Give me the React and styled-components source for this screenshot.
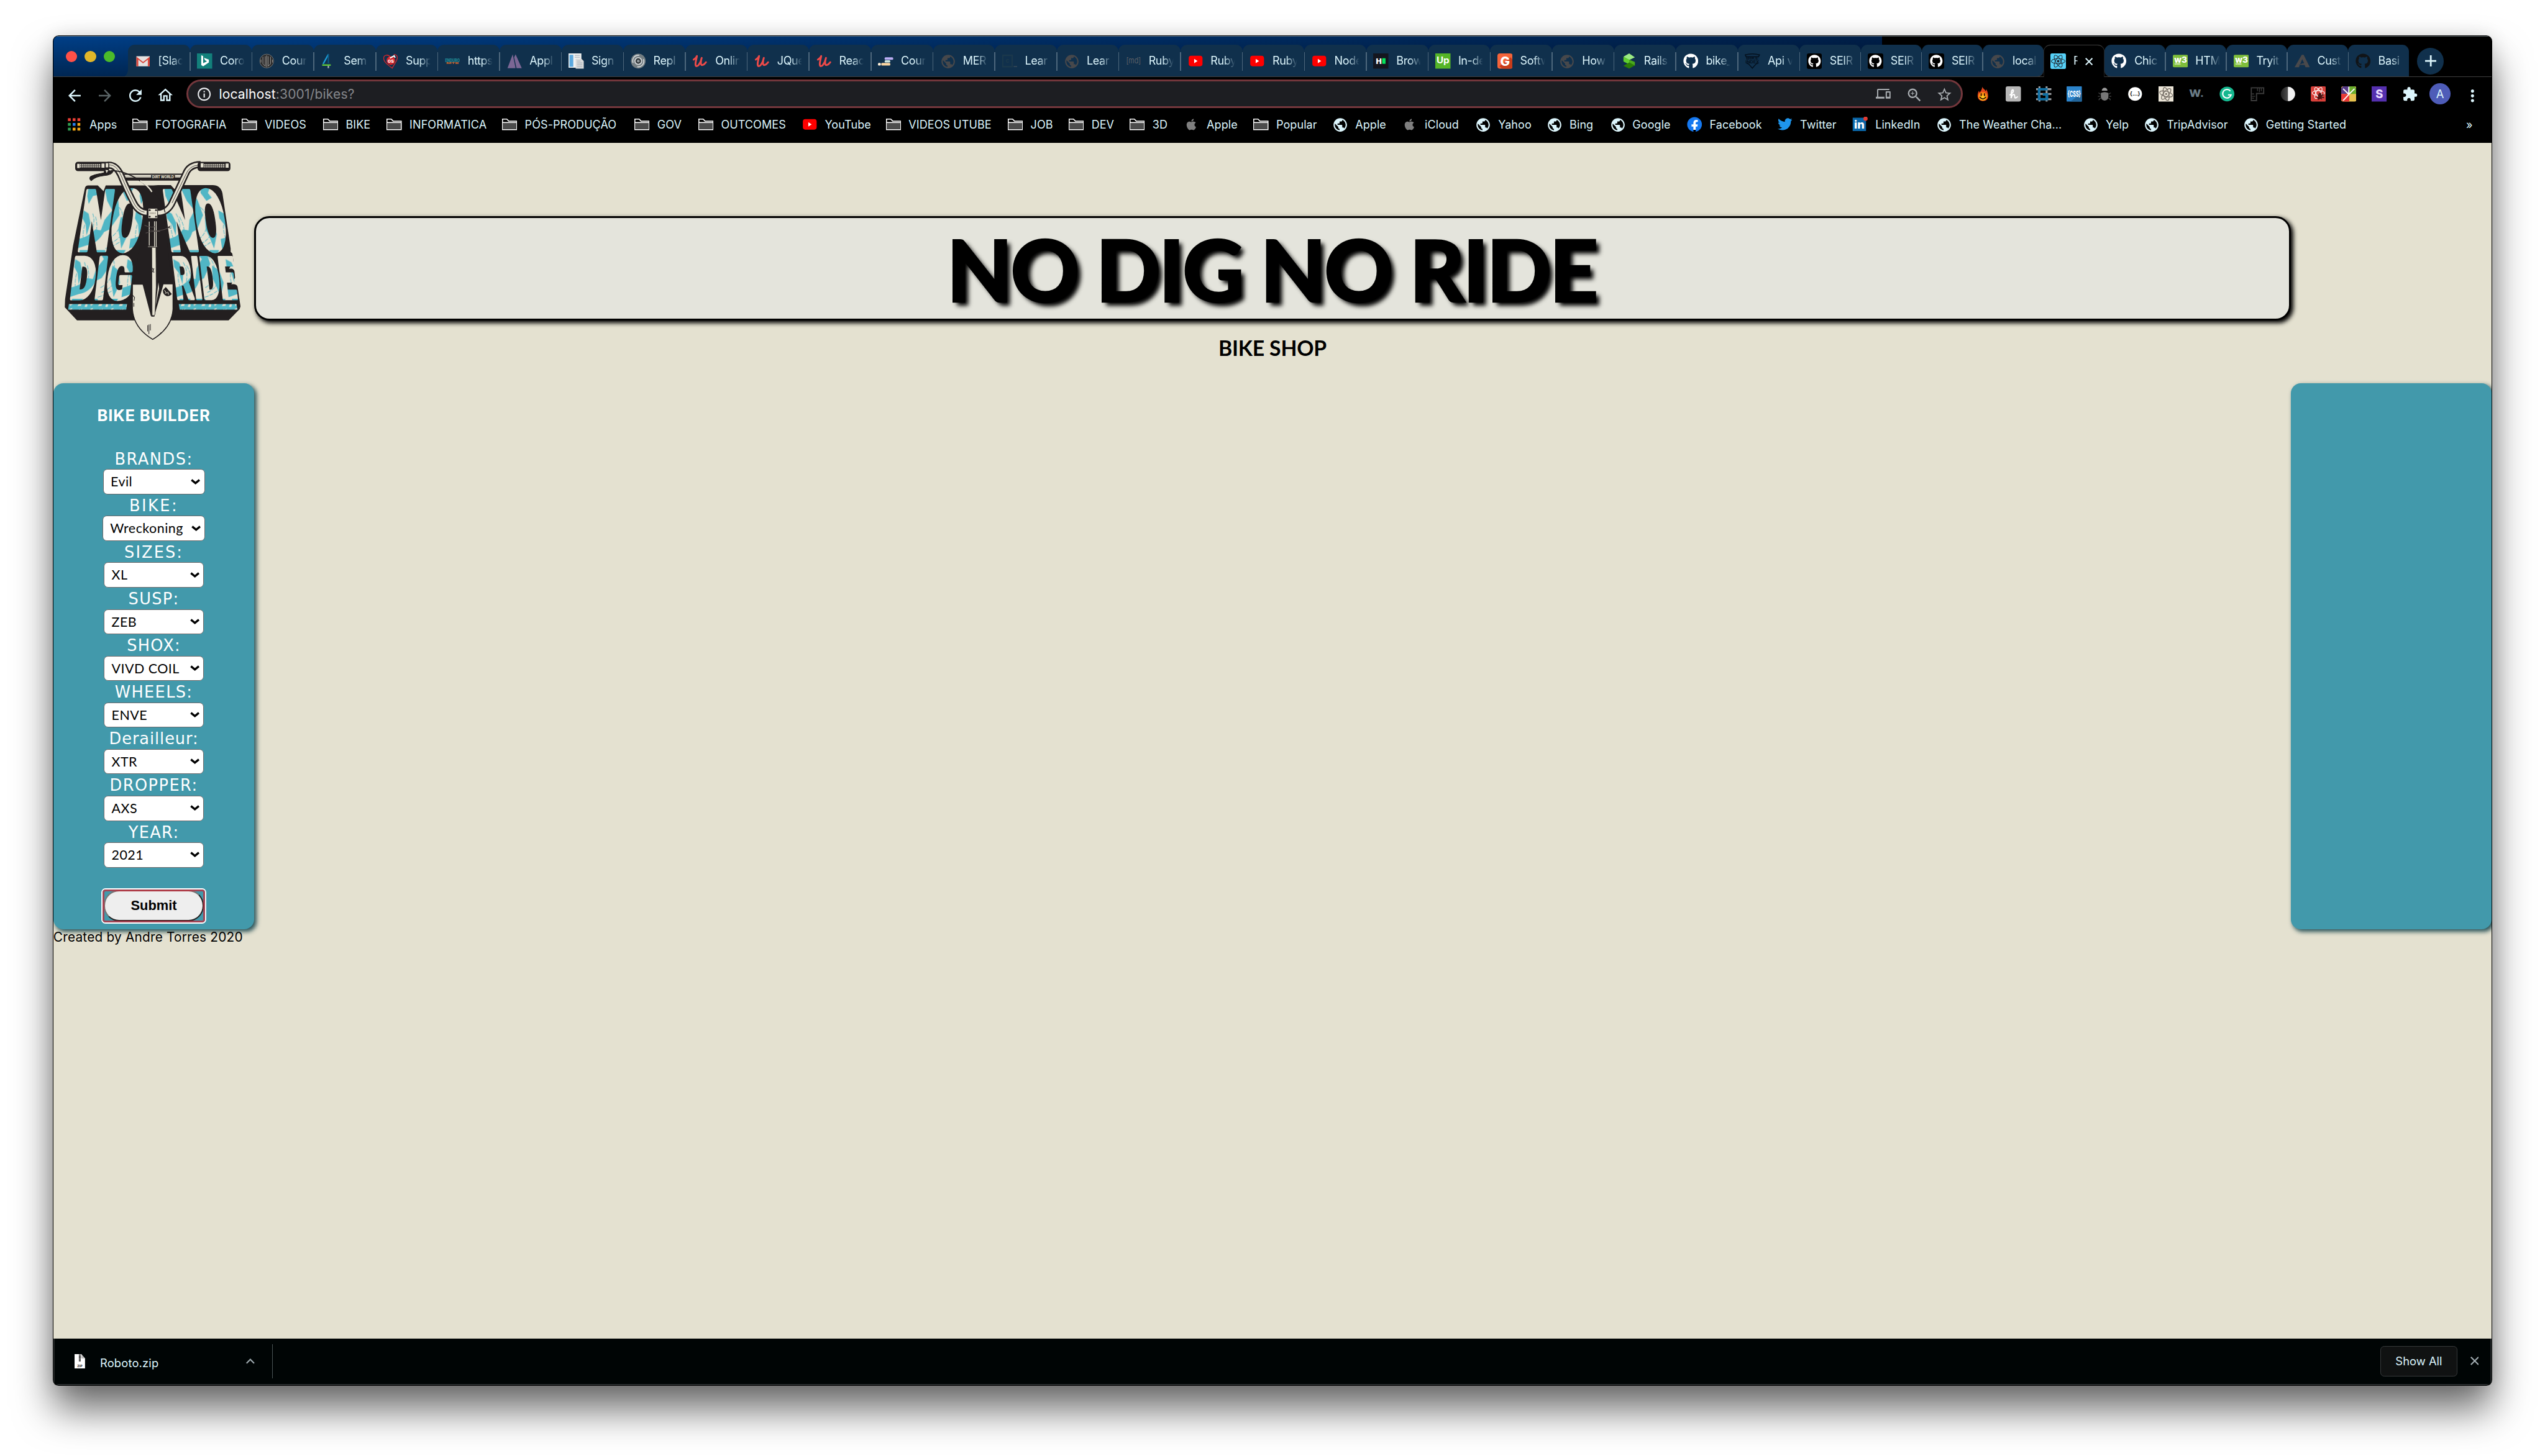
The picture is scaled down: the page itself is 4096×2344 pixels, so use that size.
import React from "react";
import styled, { createGlobalStyle, css } from "styled-components";
import {
  MdPublic, MdDevices, MdZoomIn, MdStarBorder, MdExtension, MdMoreVert,
  MdArrowBack, MdArrowForward, MdRefresh, MdInfoOutline, MdOutlineHome,
} from "react-icons/md";
import { FaGithub, FaTwitter, FaApple, FaReact, FaFacebook } from "react-icons/fa";

/* 1rem is ten device pixels of the full-size desktop */
const GlobalStyle = createGlobalStyle`
  html { font-size: 7.6647px; }
  body { margin: 0; background: #fff; overflow: hidden; }
  * { box-sizing: border-box; }
  svg { display: block; flex: none; }
`;

const ui = `Inter, "Liberation Sans", sans-serif`;
const ice = "#dcf5fc";
const tabBlue = "#10304c";

const Desktop = styled.div`
  width: 100vw;
  height: 100vh;
  padding: 7.55rem 11.2rem 0;
  overflow: hidden;
`;

const Window = styled.div`
  width: 512rem;
  height: 283.4rem;
  display: flex;
  flex-direction: column;
  border-radius: 1.1rem;
  overflow: hidden;
  background: #000;
  font-family: ${ui};
  box-shadow: 0 0 0 1px #000, 0 5rem 8rem rgba(0, 0, 0, 0.58), 0 0 4rem rgba(0, 0, 0, 0.12);
`;

/* ---------- tab strip ---------- */
const TabStrip = styled.div`
  flex: none;
  height: 8.6rem;
  display: flex;
  align-items: flex-end;
  border-top: 0.2rem solid rgba(150, 165, 170, 0.55);
  border-bottom: 0.2rem solid #3e3e3e;
  background:
    linear-gradient(rgba(0, 0, 0, 0), rgba(0, 0, 0, 0.4)) 0 0 / 384rem 100% no-repeat,
    linear-gradient(90deg, #003f88, #001f49) 0 0 / 384rem 100% no-repeat,
    #000;
  background-origin: border-box;
`;

const Lights = styled.div`
  width: 15.7rem;
  height: 100%;
  display: flex;
  gap: 1.6rem;
  padding: 3rem 0 0 2.6rem;
`;

const Light = styled.span`
  width: 2.4rem;
  height: 2.4rem;
  border-radius: 50%;
  background: ${(p) => p.$color};
`;

const TabItem = styled.div`
  flex: none;
  position: relative;
  display: flex;
  align-items: center;
  width: ${(p) => p.$w}rem;
  height: 6.6rem;
  padding: 0.2rem 0 0 1.5rem;
  gap: 1.6rem;
  color: ${ice};
  background: ${tabBlue};
  border-radius: 1.4rem 1.4rem 0 0;

  ${(p) => p.$first && css`
    &::before {
      content: "";
      position: absolute;
      left: -1rem;
      bottom: 0;
      width: 1rem;
      height: 1.6rem;
      background: radial-gradient(ellipse at 0 0, transparent 69%, ${tabBlue} 72%);
    }
  `}
  ${(p) => p.$line && css`
    &::after {
      content: "";
      position: absolute;
      left: -0.1rem;
      top: 1.5rem;
      width: 0.2rem;
      height: 4rem;
      background: #4d677c;
    }
  `}
  ${(p) => p.$active && css`
    height: 6.8rem;
    margin-bottom: -0.2rem;
    padding-top: 0;
    background: #000;
    border-top: 0.2rem solid #3e3e3e;
    box-shadow: inset 0.1rem 0 #2c2c2c, inset -0.1rem 0 #2c2c2c;
  `}
  ${(p) => p.$side && css`
    height: 6.8rem;
    margin-bottom: -0.2rem;
    padding-top: 0.2rem;
    border-bottom: 0.2rem solid #3e3e3e;
    border-radius: 1.4rem 1.4rem ${p.$side === "prev" ? "1.4rem 0" : "0 1.4rem"};
  `}
`;

const TabTitle = styled.span`
  flex: none;
  width: ${(p) => (p.$active ? "0.9rem" : "6.8rem")};
  white-space: nowrap;
  font-size: 2.35rem;
  line-height: 3.2rem;
  letter-spacing: -0.05rem;
  mask-image: ${(p) => (p.$active
    ? "linear-gradient(90deg, #000 60%, rgba(0, 0, 0, 0.3))"
    : "linear-gradient(90deg, #000 2.8rem, transparent 5.2rem)")};
`;

const NewTab = styled.div`
  width: 5.6rem;
  height: 5.6rem;
  margin: 0 0 0.4rem 1.7rem;
  border-radius: 50%;
  display: grid;
  place-items: center;
  background: ${tabBlue};
`;

/* ---------- toolbar ---------- */
const Toolbar = styled.div`
  flex: none;
  height: 7.2rem;
  display: flex;
  align-items: center;
  padding-left: 0.9rem;
  color: ${ice};
`;

const ToolCell = styled.div`
  width: 6.4rem;
  height: 6.4rem;
  display: grid;
  place-items: center;
  color: ${(p) => p.$color || "inherit"};
`;

const Omnibox = styled.div`
  width: 372.9rem;
  height: 6rem;
  margin: 0 1.1rem 0 1.5rem;
  padding: 0 1.9rem 0 1.6rem;
  display: flex;
  align-items: center;
  border: 0.4rem solid #74373c;
  border-radius: 3rem;
  background: #1d1e22;
  color: #a9adb1;
`;

const Url = styled.span`
  flex: 1;
  margin-left: 1.6rem;
  font-size: 2.75rem;
  letter-spacing: 0.02rem;
  color: #85878b;
  b { font-weight: 400; color: #fff; }
`;

const OmniIcons = styled.div`
  display: flex;
  align-items: center;
  gap: 3.2rem;
`;

const Avatar = styled.div`
  width: 4.4rem;
  height: 4.4rem;
  border-radius: 50%;
  display: grid;
  place-items: center;
  font-size: 2.4rem;
  background: #4e5cb8;
`;

/* ---------- bookmarks ---------- */
const Bookmarks = styled.div`
  flex: none;
  height: 6.6rem;
  display: flex;
  align-items: center;
  padding: 0 4rem 1.1rem 2.8rem;
  color: ${ice};
  font-size: 2.35rem;
`;

const Bookmark = styled.div`
  flex: none;
  width: ${(p) => p.$w}rem;
  display: flex;
  align-items: center;
  gap: 1.6rem;
  white-space: nowrap;
  letter-spacing: 0.01rem;
`;

const Overflow = styled.span`
  margin-left: auto;
`;

/* ---------- page ---------- */
const Page = styled.main`
  flex: 1;
  min-height: 0;
  background: #e4e1d0;
  color: #000;
`;

const Columns = styled.div`
  display: grid;
  grid-template-columns: 42.2rem 1fr 42.2rem;
`;

const Header = styled(Columns)`
  height: 50.6rem;
`;

const LogoBox = styled.div`
  padding: 3.8rem 0 0 2.3rem;
`;

const Headline = styled.div`
  padding-top: 15.4rem;
  text-align: center;
  font-family: Lato, sans-serif;
`;

const Banner = styled.h1`
  margin: 0;
  height: 22rem;
  padding-right: 0.4rem;
  border: 0.4rem solid #000;
  border-radius: 3.2rem;
  background: #e4e4dc;
  box-shadow: 0.4rem 0.4rem 1rem #000;
  font-size: 17.9rem;
  line-height: 21.4rem;
  font-weight: 900;
  letter-spacing: -0.43rem;
  -webkit-text-stroke: 0.3rem #000;
  text-shadow: 0.8rem 0.8rem 1rem #000;
`;

const Sub = styled.h2`
  margin: 2.8rem 0 0;
  font-size: 4.4rem;
  line-height: 6rem;
  font-weight: 700;
  letter-spacing: -0.02rem;
`;

const Panel = styled.section`
  height: 114.6rem;
  border-radius: 2.1rem;
  background: #4299ab;
  box-shadow: 0.4rem 0.4rem 1rem #2a5359;
  display: flex;
  flex-direction: column;
  align-items: center;
  color: #fff;
`;

const RightPanel = styled(Panel)`
  grid-column: 3;
`;

const PanelTitle = styled.h3`
  margin: 0;
  font-size: 3.35rem;
  line-height: 13.5rem;
  font-weight: 700;
  letter-spacing: 0.1rem;
`;

const Label = styled.label`
  height: 4.5rem;
  font-family: Verdana, "DejaVu Sans", sans-serif;
  font-size: 3.35rem;
  line-height: 4.8rem;
  letter-spacing: ${(p) => p.$ls}rem;
`;

const Select = styled.div`
  width: ${(p) => p.$w}rem;
  height: 5.3rem;
  padding: 0 0.8rem 0.1rem 1.5rem;
  display: flex;
  align-items: center;
  justify-content: space-between;
  border: 0.2rem solid #6f6a6b;
  border-radius: 0.9rem;
  background: #fff;
  color: #000;
  font-family: Lato, sans-serif;
  font-size: 2.8rem;
  letter-spacing: 0.06rem;
  white-space: nowrap;
`;

const Submit = styled.button`
  position: relative;
  width: 21rem;
  height: 6.5rem;
  margin-top: 4.8rem;
  padding: 0;
  border: 0.3rem solid;
  border-color: #767676 #222 #222 #767676;
  border-radius: 3.2rem;
  background: #eee;
  color: #000;
  font: 700 2.85rem "Liberation Sans", Arial, sans-serif;

  &::after {
    content: "";
    position: absolute;
    inset: -0.5rem;
    border: 0.4rem solid rgba(205, 30, 45, 0.68);
    border-radius: 0.6rem;
    box-shadow: 0 0 0 0.25rem #fff;
  }
`;

const Footer = styled.footer`
  font-size: 2.72rem;
  line-height: 3.4rem;
  letter-spacing: 0.025rem;
`;

/* ---------- download shelf ---------- */
const Shelf = styled.div`
  flex: none;
  height: 9.8rem;
  display: flex;
  align-items: center;
  padding: 0 2.7rem 0.3rem 4.5rem;
  background: #000505;
  color: ${ice};
  font-size: 2.4rem;
  box-shadow: inset 0 -0.2rem #35393a, inset 0.2rem 0 #35393a, inset -0.2rem 0 #35393a;
`;

const FileName = styled.span`
  width: 30.7rem;
  margin: 0.7rem 0 0 3.1rem;
  letter-spacing: 0.02rem;
`;

const Divider = styled.span`
  width: 0.2rem;
  height: 7.2rem;
  margin-left: 3.6rem;
  background: #4a5355;
`;

const ShowAll = styled.div`
  width: 16.2rem;
  height: 6.4rem;
  margin: 0 2.7rem 0 auto;
  display: grid;
  place-items: center;
  border: 0.1rem solid #36393a;
  border-radius: 0.8rem;
  background: #101212;
`;

/* ---------- small drawings ---------- */
const Glyph = styled.svg`
  width: ${(p) => p.$w || 3.2}rem;
  height: ${(p) => p.$h || p.$w || 3.2}rem;
`;

const Slot = styled.span`
  flex: none;
  width: 3.2rem;
  height: 3.2rem;
  display: grid;
  place-items: center;
  color: ${(p) => p.$c || "inherit"};
  background: ${(p) => p.$bg || "none"};
  border-radius: ${(p) => p.$r || 0}rem;
  svg { width: ${(p) => p.$s || 3.2}rem; height: ${(p) => p.$s || 3.2}rem; }
`;

const G = ({ children, ...rest }) => <Glyph viewBox="0 0 32 32" {...rest}>{children}</Glyph>;

const T = ({ x = 16, y, s, w = 700, fill = "#fff", f = "Inter", len, children, ...r }) => (
  <text x={x} y={y} fontSize={s} fontWeight={w} fill={fill} fontFamily={`${f}, sans-serif`}
    textAnchor="middle" textLength={len} lengthAdjust="spacingAndGlyphs" {...r}>{children}</text>
);

const YT = () => (
  <G><rect x="1.5" y="5" width="29" height="22" rx="5" fill="#f00" /><path d="M13 11.5v9l7-4.5z" fill="#fff" /></G>
);
const Udemy = () => (
  <G><path d="M3 13C7 11 9 9 10 5.500c-1 6-3 12-3 17 0 6 4 5 7 1 3-4 5-9 6-14-2 6-3 15 1 15 3 0 5-2 8-6" stroke="#ec4a49" strokeWidth="3.800" fill="none" strokeLinecap="round" strokeLinejoin="round" /></G>
);
const W3 = () => (
  <G><rect y="3" width="32" height="26" rx="2.5" fill="#7fbe3b" /><T y="20" s="17" x="16.500" w="800" len="27">w3</T><T y="24" s="4.6" x="10" len="12">schools</T></G>
);

const icons = {
  gmail: <G><path d="M2 6h28v21H2z" fill="#e4e1e0" /><path d="M2 27V7l14 11L30 7v20h-4V13l-10 8-10-8v14z" fill="#d9453a" /></G>,
  bing: <G><path d="M0 0h32v32H0z" fill="#13807b" /><path d="M9 4l4 1.5v15l8-4-4-2-2.5-5.5L25 13v6l-12 8-4-2.500z" fill="#fff" /></G>,
  court: <G><circle cx="16" cy="16" r="14.500" fill="#2c2b2b" stroke="#8a8a88" /><path d="M8 7v15l5 5V6M16 4v25M19 6v21l5-5V7M4 13v6M28 13v6" stroke="#9d9b98" strokeWidth="1.300" fill="none" /></G>,
  four: <G><path d="M15 2L4 22" stroke="#1c9bd6" strokeWidth="3" /><path d="M15 1v20" stroke="#0d5b87" strokeWidth="2.500" /><path d="M2 24.500h18" stroke="#5fc23a" strokeWidth="3.500" /><path d="M15 26v5" stroke="#a7adb0" strokeWidth="3" /></G>,
  heart: <G><path d="M23 2c8 0 9 7 6 13-3 6-6 10-9 16C12 25 2 18 2 10 2 3 12 1 16 8" stroke="#d6262b" strokeWidth="1.700" fill="none" /><circle cx="17" cy="15" r="9" fill="#d6262b" /><T y="19" s="11" x="17">os</T><path d="M15 10l9-5 2 4" stroke="#fff" strokeWidth="2.500" fill="none" /></G>,
  enduro: <G><T y="18" s="10" fill="#1f7f8c" w="900" len="31">ENDURO</T><T y="22.500" s="5" fill="#c0602f" w="900" len="26">MTB</T></G>,
  app: <G><path d="M1 31L12 2l6 29zM15 8l3-6 13 29H20z" fill="#7c6795" /></G>,
  sign: <G><path d="M0 0h27v30H0z" fill="#f1f1f1" /><path d="M2 3h8v25H2z" fill="#5aa8de" /><path d="M15 11h12l5 5v16H15z" fill="#dadada" /><path d="M18 16h7M18 20h11M18 24h11M18 28h11M13 4h11M13 8h11" stroke="#a9b2ba" strokeWidth="1.500" /></G>,
  repl: <G><circle cx="16" cy="16" r="15.500" fill="#737d82" /><circle cx="16" cy="16" r="7" fill="#2a3034" stroke="#cfd3d5" strokeWidth="2.500" /><path d="M5 20C2 9 10 3 18 4M27 12c3 11-5 17-13 16" stroke="#d2d7d9" strokeWidth="2.200" fill="none" /><circle cx="16" cy="16" r="3" fill="#8e979b" /></G>,
  udemy: <Udemy />,
  course: <G><rect x="14" y="8" width="18" height="5.500" rx="2" fill="#bcaef5" /><rect x="14" y="14.500" width="12" height="4.500" rx="2" fill="#cfe9e4" /><rect x="7" y="20" width="19" height="5.500" rx="2" fill="#f8d3a0" /><rect x="0" y="20" width="6" height="5.500" rx="2" fill="#fff0d8" /></G>,
  globe: <Slot $c={ice} $s={3.4}><MdPublic /></Slot>,
  dimGlobe: <Slot $c="#47484b" $s={3.4}><MdPublic /></Slot>,
  code: <G><path d="M1 4h20v24H1z" fill="none" stroke="#1b384b" strokeWidth="3" /><T y="20" x="11" s="13" fill="#1b384b">c</T><path d="M24 27.500h8" stroke="#41505b" strokeWidth="1.800" /></G>,
  md: <G><T y="21" s="17" w="400" fill="#5b5f66" len="31">[md]</T></G>,
  yt: <YT />,
  hacker: <G><path d="M0 0h32v32H0z" fill="#14161f" /><T x="12" y="22" s="15" w="900" len="12">H</T><path d="M19 10h7v12h-7z" fill="#05e45d" /></G>,
  up: <G><path d="M0 0h32v32H0z" fill="#55b527" /><T y="21" s="19" len="27">Up</T></G>,
  g2: <G><rect width="32" height="32" rx="5" fill="#f4643a" /><path d="M4 27L28 8l4 6v13q0 5-5 5H10z" fill="#c83c1b" /><T y="26" s="27" w="800">G</T></G>,
  rails: <G><path d="M5 7l12-7 12 8-12 6z" fill="#9bea83" /><path d="M5 7v10l12 6V13z" fill="#5fce2f" /><path d="M17 13l12 5v8l-12-6z" fill="#4aa91c" /><path d="M5 26l12-7 12 6-12 7z" fill="#2b7d07" /></G>,
  github: <Slot $c="#fff"><FaGithub /></Slot>,
  ghBox: <Slot $c="#fff" $bg="#000" $r={0.4} $s={2.7}><FaGithub /></Slot>,
  ghDark: <Slot $c="#111417"><FaGithub /></Slot>,
  bikeIndex: <G><path d="M1 3q15-4 30 0l-2 4H3zM4 21l4 1 8 9 8-9 4-1" fill="none" stroke="#04111f" strokeWidth="2" /><T y="13" s="8.500" fill="#04111f" len="26">BIKE</T><T y="20.500" s="8" fill="#04111f" len="29">INDEX</T></G>,
  react: <Slot $c="#20232a" $bg="#56d0f7" $r={0.3} $s={3}><FaReact /></Slot>,
  w3: <W3 />,
  cust: <G><path fillRule="evenodd" d="M15 3l4 0L32 29H23l-2-5H8l9-3h3l-4-9L9 29H0z" fill="#4a494b" /></G>,

  apps: (
    <G>{[0, 1, 2].map((r) => [0, 1, 2].map((c) => (
      <rect key={`${r}${c}`} x={3 + c * 10} y={3 + r * 10} width="6" height="6"
        fill={[["#ea3f35", "#ea3f35", "#ea3f35"], ["#2f9e51", "#2a7de8", "#f2a516"], ["#2f9e51", "#f2a516", "#f2a516"]][r][c]} />
    )))}</G>
  ),
  folder: <G><path d="M1 27V5h9l4 4h17v18z" fill="#000" stroke="#fff" strokeWidth="2" /><path d="M2 13h28v13H2z" fill="#4c4c4c" /><path d="M1 12h30" stroke="#fff" strokeWidth="1.800" /></G>,
  apple: <Slot $c="#7f7f7f" $s={2.7}><FaApple /></Slot>,
  facebook: <Slot $c="#1578f0" $bg="radial-gradient(#fff 55%, transparent 56%)" $s={3.2}><FaFacebook /></Slot>,
  twitter: <Slot $c="#1e95ec" $s={3.1}><FaTwitter /></Slot>,
  linkedin: <G><path d="M1 2h28v28H1z" fill="#0a66a8" /><T x="15" y="25" s="24" w="800" len="22">in</T><circle cx="28" cy="4" r="4.500" fill="#e33c32" /></G>,

  flame: <G><path d="M15 1c1 4 5 5 7 9 1-1 1-2 1-4 3 4 4 10 4 15 0 7-5 10-11 10S5 27 5 20c0-4 1-8 3-11 0 2 1 3 1 4 3-3 5-6 6-12z" fill="#e2451a" /><ellipse cx="16" cy="21" rx="9.500" ry="9" fill="#f98a15" /><ellipse cx="16" cy="24" rx="7" ry="5.500" fill="#fdc21d" /><path d="M12.500 15.500v4M19.500 15.500v4M10 23q6 7 12 0" stroke="#2a0d02" strokeWidth="2.200" fill="none" strokeLinecap="round" /></G>,
  honey: <G><rect width="32" height="32" rx="4" fill="#b7b7b7" /><path d="M9 18C14 15 17 11 16 8c-1-2-4 0-4 5l-.5 12c1-5 3-8 5.500-8 3 0 1 7 3 7.500 2 0 3-1 4.500-2.500" stroke="#fff" strokeWidth="2.600" fill="none" strokeLinecap="round" /></G>,
  gridg: <G><path d="M7 0v32M22 0v32M0 6h32M0 16h32M0 27h32" stroke="#9b9fa3" strokeWidth="4" /><path d="M24 6H6v21h17V17h-9" stroke="#0f70a5" strokeWidth="5" fill="none" /></G>,
  css: <G><rect width="32" height="32" rx="1" fill="#2c84cb" /><path d="M8 32l24-18v18z" fill="#23669b" /><T y="22" s="17" w="800" len="28">{"{CSS}"}</T></G>,
  bug: <G><path d="M10 9a6 6 0 0 1 12 0z" fill="#999" /><path d="M8 14q8-4 16 0v7q0 8-8 9-8-1-8-9z" fill="#777" /><path d="M3 14q3 0 4 3M29 14q-3 0-4 3M2 21h4M30 21h-4M4 29q0-3 4-4M28 29q0-3-4-4" stroke="#4a4a4a" strokeWidth="1.600" fill="none" /></G>,
  json: <G><circle cx="16" cy="16" r="14.500" fill="#fff" /><T y="20" s="12" fill="#111" len="22">{"{...}"}</T></G>,
  reactTool: <G><path d="M0 0h32v32H0z" fill="#ece6d8" /><g fill="none" stroke="#6d665e" strokeWidth="1.500"><ellipse cx="16" cy="16" rx="14" ry="5.500" transform="rotate(15 16 16)" /><ellipse cx="16" cy="16" rx="14" ry="5.500" transform="rotate(75 16 16)" /><ellipse cx="16" cy="16" rx="14" ry="5.500" transform="rotate(130 16 16)" /></g><circle cx="16" cy="16" r="2" fill="#6d665e" /></G>,
  wdot: <G><T y="22" s="20" w="800" fill="#6b7d88" len="31">W.</T></G>,
  grammarly: <G><circle cx="16" cy="16" r="15.500" fill="#15b88f" /><path d="M23 10a9 9 0 1 0 1.500 8H18" stroke="#fff" strokeWidth="2.800" fill="none" /></G>,
  ruler: <G><path d="M3 3h26v12H14v15H3z" fill="none" stroke="#3c3c3c" strokeWidth="2.400" /><path d="M16 4v6M20 4v8M24 4v6M4 16h5M4 21h7M4 25h5" stroke="#3c3c3c" strokeWidth="1.800" /></G>,
  contrast: <G><defs><linearGradient id="dk"><stop stopColor="#222" /><stop offset="1" stopColor="#777" /></linearGradient></defs><circle cx="16" cy="16" r="15" fill="url(#dk)" /><path d="M16 1a15 15 0 0 1 0 30z" fill="#f2f2f2" /></G>,
  redReact: <G><rect width="32" height="32" rx="3" fill="#d8403a" /><g fill="none" stroke="#fff" strokeWidth="1.500"><ellipse cx="16" cy="14" rx="13" ry="5" /><ellipse cx="16" cy="14" rx="13" ry="5" transform="rotate(60 16 14)" /><ellipse cx="16" cy="14" rx="13" ry="5" transform="rotate(120 16 14)" /></g><path d="M17 14h5v4l5-2v3l-4 2 5 2v2l-5-1 1 4-4-2-5 3v-4l-3-1 4-3-2-3 3-1z" fill="#4a1210" /></G>,
  pinwheel: <G><rect width="32" height="32" rx="4" fill="#e7c24e" /><path d="M4 0h14v16H0V4z" fill="#573b86" /><path d="M16 0h12l4 4v12H16z" fill="#6cae2d" /><path d="M0 16h17v16H4l-4-4z" fill="#ea3837" /><path d="M16 17L4 5M16 17V1M16 17L28 5M16 17L4 30" stroke="#fff" strokeWidth="2.400" /></G>,
  purpleS: <G><path d="M0 0h32v32H0z" fill="#5530ae" /><T y="25" s="24" w="800" fill="#e9dcff">S</T></G>,
};

const tabs = [
  ["gmail", "[Slac"], ["bing", "Coro"], ["court", "Cour"], ["four", "Sem"], ["heart", "Supp"],
  ["enduro", "https"], ["app", "Appl"], ["sign", "Sign"], ["repl", "Repl"], ["udemy", "Onlin"],
  ["udemy", "JQue"], ["udemy", "Reac"], ["course", "Cour"], ["dimGlobe", "MER"], ["code", "Lear"],
  ["dimGlobe", "Lear"], ["md", "Ruby"], ["yt", "Ruby"], ["yt", "Ruby"], ["yt", "Node"],
  ["hacker", "Brow"], ["up", "In-de"], ["g2", "Softw"], ["dimGlobe", "How"], ["rails", "Rails"],
  ["github", "bike_"], ["bikeIndex", "Api v"], ["ghBox", "SEIR"], ["ghBox", "SEIR"], ["ghBox", "SEIR"],
  ["dimGlobe", "local"], ["react", "R"], ["github", "Chic"], ["w3", "HTM"], ["w3", "Tryit"],
  ["cust", "Cust"], ["ghDark", "Basi"],
];
const ACTIVE = 31;

const bookmarks = [
  ["apps", "Apps", 13.8], ["folder", "FOTOGRAFIA", 23], ["folder", "VIDEOS", 17], ["folder", "BIKE", 13.4],
  ["folder", "INFORMATICA", 24.2], ["folder", "PÓS-PRODUÇÃO", 27.8], ["folder", "GOV", 13.4],
  ["folder", "OUTCOMES", 21.8], ["yt", "YouTube", 17.6], ["folder", "VIDEOS UTUBE", 25.6], ["folder", "JOB", 12.8],
  ["folder", "DEV", 12.8], ["folder", "3D", 11.4], ["apple", "Apple", 14.6], ["folder", "Popular", 16.6],
  ["globe", "Apple", 14.6], ["apple", "iCloud", 15.4], ["globe", "Yahoo", 15], ["globe", "Bing", 13.2],
  ["globe", "Google", 16.2], ["facebook", "Facebook", 19], ["twitter", "Twitter", 15.8],
  ["linkedin", "LinkedIn", 17.6], ["globe", "The Weather Cha...", 30.8], ["globe", "Yelp", 12.8],
  ["globe", "TripAdvisor", 20.8], ["globe", "Getting Started", 23],
];

const extensions = ["flame", "honey", "gridg", "css", "bug", "json", "reactTool", "wdot", "grammarly",
  "ruler", "contrast", "redReact", "pinwheel", "purpleS"];

const fields = [
  ["BRANDS:", "Evil", 21.4, 0.19], ["BIKE:", "Wreckoning", 21.6, 0.32], ["SIZES:", "XL", 21, 0.27],
  ["SUSP:", "ZEB", 21, 0.17], ["SHOX:", "VIVD COIL", 21, 0.17], ["WHEELS:", "ENVE", 21, 0.17],
  ["Derailleur:", "XTR", 21, 0.12], ["DROPPER:", "AXS", 21, 0.19], ["YEAR:", "2021", 21, 0.17],
];

/* ---------- shop logo ---------- */
const ink = "#231f20";
const cream = "#e6e2d2";
const Word = ({ m, len, size, bold, children }) => (
  <text transform={m} fontFamily="Roboto, sans-serif" fontWeight="900" fontSize={size}
    textLength={len} lengthAdjust="spacingAndGlyphs" fill="url(#marble)"
    stroke="url(#marble)" strokeWidth={bold} strokeLinejoin="round">{children}</text>
);

const Logo = () => (
  <Glyph viewBox="105 115 1120 1135" $w={37.33} $h={37.83}>
    <defs>
      <pattern id="marble" width="330" height="400" patternUnits="userSpaceOnUse">
        <path d="M0 0h330v400H0z" fill={cream} />
        <g fill="#50b6c5">
          <path d="M20 0h70l-20 30 26 20-40 10-20 50-16-50zM120 0h60l40 90 20 90-50 90-60 30 20-90 40-60-40-60zM250 0h60l-20 40 20 30-36 20-30-50z" />
          <path d="M0 330q60-10 100-60l60 10q-30 80-100 90l-60 20zM10 150l34 20 20 60-14 80-14-70-26-40zM250 190l40 30 20 80-30 90-16-60-20-60z" />
        </g>
        <g stroke="#50b6c5" strokeWidth="4" fill="none">
          <path d="M70 170q30 60 0 140M90 190q30 70 10 120M190 330q40-20 60-70M200 360q50-20 80-70M180 390q70-20 120-70M30 240q-10 60 10 120M230 130q40 40 30 90" strokeDasharray="26 7" />
        </g>
      </pattern>
      <pattern id="bar" width="130" height="40" patternUnits="userSpaceOnUse">
        <path d="M0 0h130v40H0z" fill="#50b6c5" />
        <path d="M10 8l18-6-6 14 14-4-22 18zM60 30l12-22 6 8 12-12-8 24zM104 34l8-18 12 4-6 16z" fill={cream} />
      </pattern>
    </defs>
    <path d="M236 290q4-20 22-20h60l36 36 14-36h300l30-2h80l28 30 20-30h215q50 0 62 50l52 350v20q10 6 12 20l6 40-28 46h18q14 4 16 18l4 40-24 40h16q22 2 24 20l18 120-6 18-69 70H187l-77-82 2-52 50-336z" fill={ink} />
    <Word m="matrix(1 0 -0.14 1 184 677)" len="390" size="526" bold="26">NO</Word>
    <Word m="matrix(1 0 0.14 1 772 677)" len="376" size="526" bold="26">NO</Word>
    <Word m="matrix(1 0 -0.12 1 136 984)" len="386" size="368" bold="20">DIG</Word>
    <Word m="matrix(1 0 0.12 1 813 984)" len="386" size="368" bold="18">RIDE</Word>
    <path d="M590 600L604 470h130l30 240 30 350-90 50H560l-40-50z" fill={ink} />
    <path d="M136 1017h366l-5 36H131zM828 1017h364l6 36H834z" fill="url(#bar)" />

    <path d="M536 892h92l30 202h14l32-204h88v160q-8 118-128 190-120-72-128-190z" fill={cream} stroke={ink} strokeWidth="6" />
    <path d="M600 892l52 200h22l58-200-34-20h-60z" fill={ink} />
    <path d="M700 880l4 40-22 110z" fill={cream} />
    <path d="M658 660h26l2 250-8 174q-8 10-18 4z" fill={cream} stroke={ink} strokeWidth="3" />
    <path d="M662 790l10 30M672 792l-12 26M632 1150v40M640 1146v60M649 1144v40M700 1215l18-18M536 960l14 16-4 20M545 1010v24" stroke={ink} strokeWidth="4" fill="none" />
    <path d="M728 930l18-20 38 44q-14 18-34 12-22-8-22-36z" fill={ink} />
    <path d="M738 930l10 14M742 950l12-4M758 940l6 18" stroke={cream} strokeWidth="4" />

    <g fill="none" strokeLinecap="butt">
      <path d="M480 217h370" stroke={ink} strokeWidth="44" />
      <path d="M482 212h366" stroke={cream} strokeWidth="18" />
      <path d="M482 217h366" stroke={ink} strokeWidth="2" />
      <path d="M380 142q50-6 82 60 40 96 78 170 30 66 86 70M965 138q-72 0-94 60L790 372q-30 70-96 70" stroke={ink} strokeWidth="44" />
      <path d="M380 142q50-6 82 60 40 96 78 170 30 66 86 70M965 138q-72 0-94 60L790 372q-30 70-96 70" stroke={cream} strokeWidth="25" />
      <path d="M392 140q44 0 72 66 40 96 78 170 26 56 70 62M955 142q-60 0-84 62L786 380" stroke={ink} strokeWidth="3" />
      <path d="M400 176q130 0 264 130" stroke={ink} strokeWidth="7" />
      <path d="M585 240q50 30 74 70" stroke={cream} strokeWidth="9" />
      <path d="M664 306q60 54 78 134" stroke={ink} strokeWidth="5" />
    </g>
    <rect x="654" y="204" width="150" height="24" fill={ink} />
    <text x="729" y="226" textAnchor="middle" fontFamily="Roboto, sans-serif" fontWeight="700" fontSize="25" textLength="138" fill={cream}>DIRT WORLD</text>
    <g stroke={ink} strokeWidth="7">
      <rect x="179" y="124" width="208" height="52" rx="14" fill={ink} />
      <rect x="950" y="124" width="200" height="52" rx="14" fill={ink} />
    </g>
    <path d="M188 134h16v26h-16zM342 132h18v26h-18zM368 130h16v26h-16zM966 130h18v26h-18zM1124 132h18v26h-18z" fill={cream} />
    <path d="M206 140h132M206 152h132M988 140h132M988 152h132" stroke={cream} strokeWidth="8" strokeDasharray="9 4" />
    <path d="M276 240q-16-14-4-26 10-10 84-24 6-24 20-22 20 16 40 10-10 28-60 30-50 4-80 32z" fill={ink} stroke={ink} strokeWidth="4" />
    <path d="M366 172l18 2-10 18z" fill={cream} />

    <path d="M638 486h52v172h-52z" fill={ink} />
    <path d="M642 498v150M675 496v158M686 496v158" stroke={cream} strokeWidth="5" />
    <path d="M634 656h58" stroke={cream} strokeWidth="3" />
    <path d="M612 520q40 20 70 8M640 548q60 20 130-14M620 570q40-16 90-10" stroke="#57504e" strokeWidth="4" fill="none" />
    <path d="M760 534l14-8M764 534l12 6" stroke={ink} strokeWidth="4" />
    <rect x="635" y="414" width="60" height="64" fill={cream} stroke={ink} strokeWidth="4" />
    <g fill={ink}><circle cx="645" cy="425" r="6" /><circle cx="685" cy="425" r="6" /><circle cx="645" cy="466" r="6" /><circle cx="685" cy="466" r="6" /></g>
    <path d="M647 440v10M655 440v10M663 440v10M671 440v10M680 440v10" stroke="#8a8478" strokeWidth="4" />
  </Glyph>
);

const Caret = () => (
  <Glyph viewBox="0 0 18 11" $w={2} $h={1.22}>
    <path d="M1.500 2L9 8l7.500-6" fill="none" stroke="#000" strokeWidth="4" />
  </Glyph>
);

export default function App() {
  return (
    <Desktop>
      <GlobalStyle />
      <Window>
        <TabStrip>
          <Lights>
            <Light $color="#ff5048" />
            <Light $color="#e0b62a" />
            <Light $color="#4bba2a" />
          </Lights>
          {tabs.map(([icon, title], i) => (
            <TabItem
              key={i}
              $w={i < 27 ? 13 : 12.8}
              $first={i === 0}
              $line={i > 0 && i !== ACTIVE && i !== ACTIVE + 1}
              $active={i === ACTIVE}
              $side={i === ACTIVE - 1 ? "prev" : i === ACTIVE + 1 ? "next" : undefined}
            >
              {icons[icon]}
              <TabTitle $active={i === ACTIVE}>{title}</TabTitle>
              {i === ACTIVE && (
                <Glyph viewBox="0 0 16 16" $w={1.6}><path d="M1 1l14 14M15 1L1 15" stroke={ice} strokeWidth="2.600" /></Glyph>
              )}
            </TabItem>
          ))}
          <NewTab>
            <Glyph viewBox="0 0 24 24" $w={2.4}><path d="M12 0v24M0 12h24" stroke={ice} strokeWidth="3.600" /></Glyph>
          </NewTab>
        </TabStrip>

        <Toolbar>
          <ToolCell><Slot $s={3.9}><MdArrowBack /></Slot></ToolCell>
          <ToolCell $color="#5b6567"><Slot $s={3.9}><MdArrowForward /></Slot></ToolCell>
          <ToolCell><Slot $s={3.9}><MdRefresh /></Slot></ToolCell>
          <ToolCell><Slot $s={3.7}><MdOutlineHome /></Slot></ToolCell>
          <Omnibox>
            <Slot $c="#e8eaed" $s={3.3}><MdInfoOutline /></Slot>
            <Url><b>localhost</b>:3001/bikes?</Url>
            <OmniIcons>
              <Slot $s={3.1}><MdDevices /></Slot>
              <Slot $s={3.7}><MdZoomIn /></Slot>
              <Slot $s={3.5}><MdStarBorder /></Slot>
            </OmniIcons>
          </Omnibox>
          {extensions.map((name) => <ToolCell key={name}>{icons[name]}</ToolCell>)}
          <ToolCell><Slot $s={3.3}><MdExtension /></Slot></ToolCell>
          <ToolCell><Avatar>A</Avatar></ToolCell>
          <ToolCell><Slot $s={4}><MdMoreVert /></Slot></ToolCell>
        </Toolbar>

        <Bookmarks>
          {bookmarks.map(([icon, label, w], i) => (
            <Bookmark key={i} $w={w}>{icons[icon]}{label}</Bookmark>
          ))}
          <Overflow>»</Overflow>
        </Bookmarks>

        <Page>
          <Header>
            <LogoBox><Logo /></LogoBox>
            <Headline>
              <Banner>NO DIG NO RIDE</Banner>
              <Sub>BIKE SHOP</Sub>
            </Headline>
          </Header>
          <Columns>
            <Panel>
              <PanelTitle>BIKE BUILDER</PanelTitle>
              {fields.map(([label, value, w, ls]) => (
                <React.Fragment key={label}>
                  <Label $ls={ls}>{label}</Label>
                  <Select $w={w}>{value}<Caret /></Select>
                </React.Fragment>
              ))}
              <Submit>Submit</Submit>
            </Panel>
            <RightPanel />
          </Columns>
          <Footer>Created by Andre Torres 2020</Footer>
        </Page>

        <Shelf>
          <Glyph viewBox="0 0 22 30" $w={2.2} $h={3}>
            <path d="M0 0h14l8 9v21H0z" fill="#fff" />
            <path d="M14 0v9h8" fill="#bbb" />
            <path d="M11 1v15" stroke="#111" strokeWidth="4" strokeDasharray="2 1" />
            <T x={11} y={27.500} s={7} fill="#333">ZIP</T>
          </Glyph>
          <FileName>Roboto.zip</FileName>
          <Glyph viewBox="0 0 18 11" $w={1.8} $h={1.1}><path d="M1 10l8-8 8 8" stroke="#9fabb0" strokeWidth="2.800" fill="none" /></Glyph>
          <Divider />
          <ShowAll>Show All</ShowAll>
          <Glyph viewBox="0 0 18 18" $w={1.8}><path d="M1 1l16 16M17 1L1 17" stroke="#9fabb0" strokeWidth="2.800" /></Glyph>
        </Shelf>
      </Window>
    </Desktop>
  );
}
